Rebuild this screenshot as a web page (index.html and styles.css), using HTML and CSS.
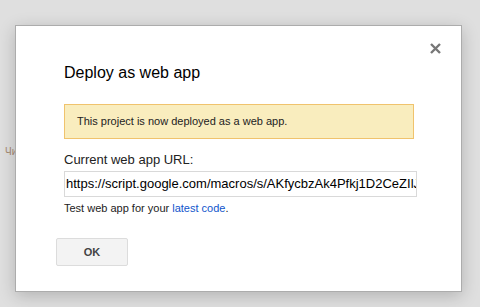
FILE: index.html
```html
<!DOCTYPE html>
<html>
<head>
<meta charset="utf-8">
<link rel="stylesheet" href="styles.css">
</head>
<body>
<span class="behind">Чи</span>
<div class="overlay">
  <div class="dialog">
    <button class="close" aria-label="Close">
      <svg width="11" height="11" viewBox="0 0 11 11"><path d="M1 1L10 10M10 1L1 10" stroke="#777" stroke-width="2.4" fill="none"/></svg>
    </button>
    <h1 class="title">Deploy as web app</h1>
    <div class="notice">This project is now deployed as a web app.</div>
    <label class="label">Current web app URL:</label>
    <div class="url">https://script.google.com/macros/s/AKfycbzAk4Pfkj1D2CeZIlJ</div>
    <p class="hint">Test web app for your <a href="#">latest code</a>.</p>
    <button class="ok">OK</button>
  </div>
</div>
</body>
</html>
```
FILE: styles.css
```css
html, body {
  margin: 0;
  height: 100%;
}
body {
  background: #dfdfdf;
  font-family: "Liberation Sans", Arial, sans-serif;
  position: relative;
  overflow: hidden;
}
.behind {
  position: absolute;
  left: 5px;
  top: 146px;
  font-size: 10px;
  color: #a58a72;
}
.overlay {
  position: relative;
  padding: 25px 0 0 15px;
}
.dialog {
  position: relative;
  width: 447px;
  height: 267px;
  box-sizing: border-box;
  background: #fff;
  border: 1px solid #acacac;
  box-shadow: 0 4px 16px rgba(0, 0, 0, 0.2);
  padding: 37px 44px 0 48px;
}
.close {
  position: absolute;
  top: 16px;
  right: 19px;
  width: 13px;
  height: 13px;
  padding: 1px;
  border: 0;
  background: none;
  display: flex;
}
.title {
  margin: 0;
  font-size: 16px;
  line-height: 20px;
  font-weight: normal;
  color: #000;
}
.notice {
  margin-top: 21px;
  width: 350px;
  height: 35px;
  box-sizing: border-box;
  background: #f9edbe;
  border: 1px solid #f0c36d;
  padding-left: 12px;
  display: flex;
  align-items: center;
  font-size: 11px;
  line-height: 13px;
  color: #222;
}
.label {
  display: block;
  margin-top: 13px;
  font-size: 13px;
  line-height: 15px;
  color: #222;
}
.url {
  margin-top: 4px;
  width: 353px;
  height: 26px;
  box-sizing: border-box;
  border: 1px solid #d9d9d9;
  padding: 0 0 0 1px;
  font-size: 13px;
  line-height: 24px;
  color: #000;
  white-space: nowrap;
  overflow: hidden;
}
.hint {
  margin: 5px 0 0;
  font-size: 11px;
  line-height: 13px;
  color: #222;
}
.hint a {
  color: #15c;
  text-decoration: none;
}
.ok {
  margin: 23px 0 0 -8px;
  width: 72px;
  height: 28px;
  box-sizing: border-box;
  background: #f3f3f3;
  border: 1px solid #dcdcdc;
  border-radius: 2px;
  font-family: "Liberation Sans", Arial, sans-serif;
  font-size: 11px;
  font-weight: bold;
  color: #444;
  padding: 0;
}
```
